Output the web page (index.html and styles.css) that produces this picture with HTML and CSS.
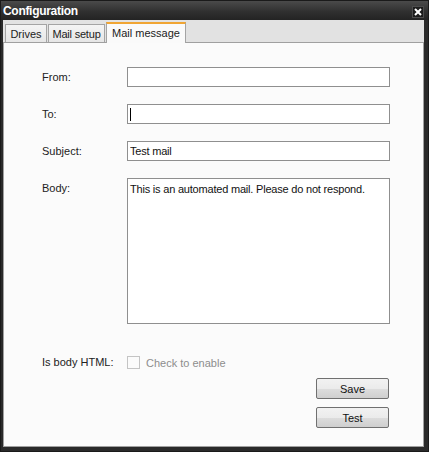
FILE: index.html
```html
<!DOCTYPE html>
<html lang="en">
<head>
    <meta charset="UTF-8" />
    <title>Configuration</title>
    <link rel="stylesheet" href="styles.css">
</head>
<body>

    <div class="window">
        <div class="titlebar">
            <span class="title">Configuration</span>
            <span class="close">
                <svg width="8" height="8" viewBox="0 0 8 8">
                    <path d="M1 1 L7 7 M7 1 L1 7" stroke="#fff" stroke-width="2" />
                </svg>
            </span>
        </div>

        <div class="client">
            <div class="tabs">
                <div class="tab tab-drives">Drives</div>
                <div class="tab tab-setup">Mail setup</div>
                <div class="tab active">Mail message</div>
            </div>

            <div class="panel">
                <div class="form">
                    <label class="label">From:</label>
                    <input class="field" type="text" value="">

                    <label class="label">To:</label>
                    <div class="field-wrap">
                        <input class="field" type="text" value="">
                        <span class="caret"></span>
                    </div>

                    <label class="label">Subject:</label>
                    <input class="field" type="text" value="Test mail">

                    <label class="label">Body:</label>
                    <textarea class="field body-field">This is an automated mail. Please do not respond.</textarea>

                    <label class="label check-label">Is body HTML:</label>
                    <div class="check-row">
                        <span class="checkbox"></span>
                        <span class="check-text">Check to enable</span>
                    </div>
                </div>

                <div class="buttons">
                    <button class="btn">Save</button>
                    <button class="btn">Test</button>
                </div>
            </div>
        </div>
    </div>

</body>
</html>
```

FILE: styles.css
```css
* {
    box-sizing: border-box;
    margin: 0;
    padding: 0;
    font-family: 'Liberation Sans', Arial, sans-serif;
}

body {
    width: 429px;
    height: 452px;
    background: #2b2b2b;
    overflow: hidden;
}

.window {
    width: 429px;
    height: 452px;
    display: flex;
    flex-direction: column;
    background: #2a2a2a;
    border: 1px solid #1a1a1a;
}

.titlebar {
    height: 19px;
    display: flex;
    align-items: center;
    justify-content: space-between;
    padding: 0 4px 0 2px;
    background: linear-gradient(#4a4a4a, #303030 55%, #232323);
}

.title {
    color: #fff;
    font-weight: bold;
    font-size: 12px;
    letter-spacing: -0.3px;
    padding-top: 1px;
}

.close {
    width: 12px;
    height: 12px;
    display: flex;
    align-items: center;
    justify-content: center;
    background: #1c1c1c;
    border: 1px solid #4c4c4c;
    margin-top: 2px;
}

.client {
    flex: 1;
    display: flex;
    flex-direction: column;
    margin: 0 4px 4px 2px;
    background: #e2e2e2;
}

.tabs {
    height: 22px;
    display: flex;
    align-items: flex-end;
    padding-left: 2px;
    gap: 1px;
}

.tab {
    height: 18px;
    padding-top: 3px;
    text-align: center;
    white-space: nowrap;
    font-size: 11px;
    color: #222;
    background: linear-gradient(#f4f4f4, #e6e6e6);
    border: 1px solid #a4a4a4;
    border-bottom: none;
}

.tab-drives {
    width: 42px;
}

.tab-setup {
    width: 57px;
    letter-spacing: -0.2px;
}

.tab.active {
    height: 21px;
    width: 80px;
    background: #fafafa;
    border-top: 2px solid #f0a533;
    margin-bottom: -1px;
    position: relative;
    z-index: 1;
}

.panel {
    flex: 1;
    background: #fbfbfb;
    border: 1px solid #a0a0a0;
    padding: 24px 33px 0 38px;
}

.form {
    display: grid;
    grid-template-columns: 85px 263px;
    row-gap: 17px;
}

.label {
    font-size: 11px;
    color: #222;
    padding-top: 4px;
}

.field {
    width: 263px;
    height: 20px;
    border: 1px solid #8f8f8f;
    background: #fff;
    font-size: 11px;
    letter-spacing: -0.2px;
    color: #111;
    padding: 0 2px;
    outline: none;
}

.field-wrap {
    position: relative;
}

.caret {
    position: absolute;
    left: 3px;
    top: 4px;
    width: 1px;
    height: 13px;
    background: #000;
}

.body-field {
    height: 146px;
    resize: none;
    padding: 4px 2px;
    line-height: 13px;
}

.check-label {
    margin-top: 15px;
    padding-top: 0;
    line-height: 13px;
}

.check-row {
    margin-top: 15px;
    display: flex;
    align-items: center;
    gap: 6px;
    height: 13px;
}

.checkbox {
    width: 13px;
    height: 13px;
    border: 1px solid #c4c4c4;
    background: #fbfbfb;
}

.check-text {
    font-size: 11px;
    color: #8d8d8d;
}

.buttons {
    display: flex;
    flex-direction: column;
    align-items: flex-end;
    gap: 8px;
    margin-top: 9px;
    padding-right: 1px;
}

.btn {
    width: 73px;
    height: 21px;
    font-size: 11px;
    color: #111;
    border: 1px solid #707070;
    border-radius: 2px;
    background: linear-gradient(#f2f2f2 0%, #ebebeb 50%, #dddddd 51%, #cfcfcf 100%);
}
```
